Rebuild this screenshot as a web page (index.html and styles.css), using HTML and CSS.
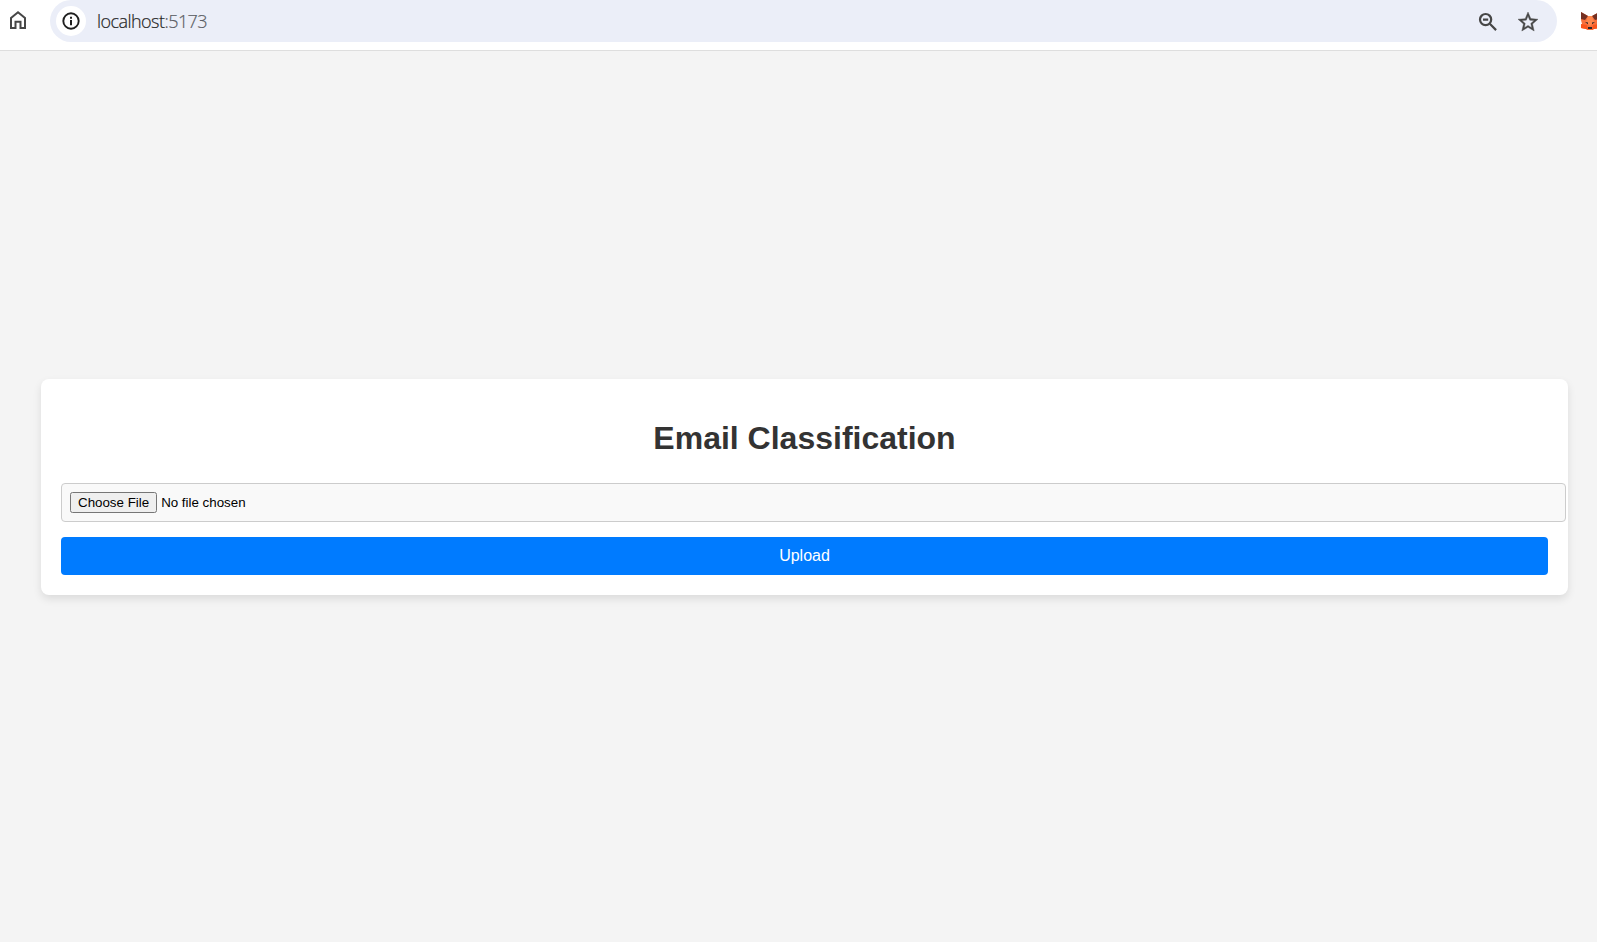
FILE: index.html
```html
<!DOCTYPE html>
<html lang="en">
<head>
<meta charset="utf-8">
<title>Email Classification</title>
<link rel="stylesheet" href="styles.css">
</head>
<body>
<header class="toolbar">
  <svg class="home" width="24" height="24" viewBox="0 0 24 24" fill="none" stroke="#474747" stroke-width="2"><path d="M5 20V10l7-5.8 7 5.8v10h-4.5v-6.2h-5V20z"/></svg>
  <div class="address">
    <span class="info"><svg width="20" height="20" viewBox="0 0 20 20"><circle cx="10" cy="10" r="7.7" fill="none" stroke="#1f1f1f" stroke-width="1.9"/><path d="M9 5.8h2v2H9zM9 9h2v5.2H9z" fill="#1f1f1f"/></svg></span>
    <span class="url">localhost<span class="port">:5173</span></span>
    <svg class="search" width="20" height="20" viewBox="0 0 20 20" fill="none" stroke="#474747" stroke-width="2.2"><circle cx="7.6" cy="7.6" r="5.6"/><path d="M11.8 11.8l6.3 6.3M5 7.6h5.2"/></svg>
    <svg class="star" width="24" height="24" viewBox="0 0 24 24" fill="#474747" stroke="#474747" stroke-width=".4"><path d="M22 9.24l-7.19-.62L12 2 9.19 8.63 2 9.24l5.46 4.73L5.82 21 12 17.27 18.18 21l-1.63-7.03L22 9.24zM12 15.4l-3.76 2.27 1-4.28-3.32-2.88 4.38-.38L12 6.1l1.71 4.04 4.38.38-3.32 2.88 1 4.28L12 15.4z"/></svg>
  </div>
  <svg class="fox" width="20" height="20" viewBox="0 0 20 20"><path d="M1 1l7 4h4l7-4v8l-1 4 1 4-5 1-2 1H8l-2-1-5-1 1-4-1-4z" fill="#f8703c"/><path d="M1 1l7 4-3 4-4-1zM19 1l-7 4 3 4 4-1z" fill="#743022"/><path d="M8 5h4l2 6-4 4-4-4z" fill="#ff884d"/><path d="M1 13l6 1 1 5-2-1-5-1zM19 13l-6 1-1 5 2-1 5-1z" fill="#f9551c"/><path d="M5 11l3 .5v1.7zM15 11l-3 .5v1.7zM8 16h4v2H8z" fill="#2c2428"/></svg>
</header>
<main class="page">
  <section class="card">
    <h1 class="title">Email Classification</h1>
    <input class="file" type="file" aria-label="Email file">
    <button class="upload" type="button">Upload</button>
  </section>
</main>
</body>
</html>
```
FILE: styles.css
```css
body {
  margin: 0;
  height: 942px;
  overflow: hidden;
  display: flex;
  flex-direction: column;
  background: #f4f4f4;
  font-family: "Liberation Sans", Arial, sans-serif;
}
.toolbar {
  box-sizing: border-box;
  flex: none;
  height: 51px;
  display: flex;
  align-items: flex-start;
  background: #fff;
  border-bottom: 1px solid #dedede;
}
.home { flex: none; margin: 8px 20.5px 0 5.5px; }
.address {
  box-sizing: border-box;
  flex: none;
  width: 1507px;
  height: 42px;
  padding: 0 17.5px 0 6px;
  display: flex;
  align-items: center;
  background: #ebeef8;
  border-radius: 21px;
}
.info {
  width: 30px;
  height: 30px;
  display: flex;
  align-items: center;
  justify-content: center;
  background: #fff;
  border-radius: 50%;
}
.url {
  flex: 1;
  margin-left: 11px;
  font: 300 18px/24px "Open Sans", "Noto Sans", sans-serif;
  letter-spacing: -0.55px;
  color: #1f1f1f;
  -webkit-text-stroke: 0.2px;
}
.port { color: #5a5d64; }
.search { margin: 2px 17.5px 0 0; }
.star { margin-top: 1px; }
.fox { flex: none; margin: 11px 0 0 23px; }
.page {
  flex: 1;
  display: flex;
  align-items: center;
  padding: 0 29px 0 41px;
}
.card {
  box-sizing: border-box;
  flex: 1;
  min-width: 0;
  height: 216px;
  margin-bottom: 19px;
  padding: 20px;
  display: flex;
  flex-direction: column;
  background: #fff;
  border-radius: 8px;
  box-shadow: 0 4px 8px rgba(0, 0, 0, 0.1);
}
.title {
  height: 84px;
  margin: 0;
  font-size: 32px;
  line-height: 79px;
  text-align: center;
  color: #333;
}
.file {
  box-sizing: border-box;
  flex: none;
  width: 1505px;
  height: 39px;
  padding: 8px;
  border: 1px solid #ccc;
  border-radius: 4px;
  background: #f9f9f9;
  color: #000;
  font: 13.333px "Liberation Sans", Arial, sans-serif;
}
.upload {
  height: 38px;
  margin-top: 15px;
  padding: 10px;
  border: 0;
  border-radius: 4px;
  background: #007bff;
  color: #fff;
  font: 16px/18px "Liberation Sans", Arial, sans-serif;
}
```
